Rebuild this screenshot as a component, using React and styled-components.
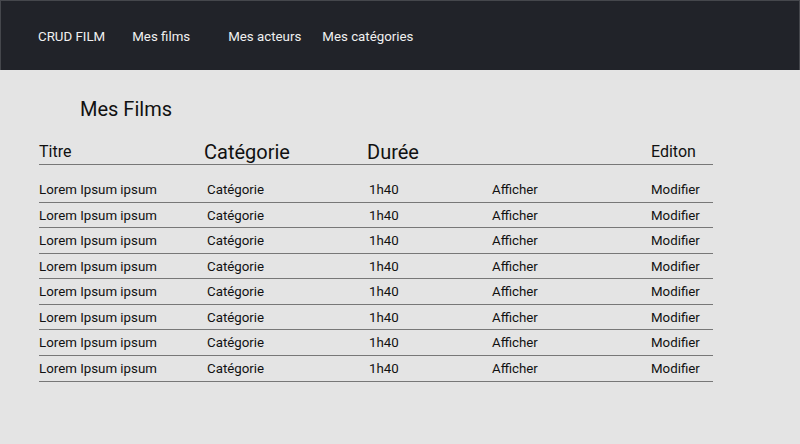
import React from "react";
import styled, { createGlobalStyle } from "styled-components";

const GlobalStyle = createGlobalStyle`
  html, body {
    margin: 0;
    padding: 0;
    background: #e4e4e4;
    font-family: Roboto, "Liberation Sans", sans-serif;
    color: #111;
  }
`;

const NavBar = styled.nav`
  height: 70px;
  box-sizing: border-box;
  background: #212329;
  border: 1px solid #45474c;
  border-bottom: none;
  display: flex;
  align-items: center;
  padding-left: 37px;
  padding-top: 1px;
`;

const NavLink = styled.a`
  color: #f0f0f0;
  font-size: 13.3px;
  text-decoration: none;
  margin-right: ${(p) => p.$space || 0}px;
  cursor: pointer;
`;

const Main = styled.main`
  padding: 27px 0 0 39px;
`;

const PageTitle = styled.h1`
  margin: 0 0 10px 41px;
  font-size: 20px;
  line-height: 24px;
  font-weight: 400;
`;

const Table = styled.div`
  width: 674px;
`;

const Columns = `
  display: grid;
  grid-template-columns: 168px 162px 123px 159px 62px;
`;

const HeadRow = styled.div`
  ${Columns}
  height: 33px;
  align-items: end;
  border-bottom: 1px solid #777;
  margin-bottom: 12px;
`;

const HeadCell = styled.div`
  font-size: ${(p) => (p.$big ? 20 : 16)}px;
  line-height: ${(p) => (p.$big ? 24 : 20)}px;
  margin-left: ${(p) => p.$shift || 0}px;
  margin-bottom: ${(p) => (p.$big ? 0 : 2)}px;
  grid-column: ${(p) => p.$span || "auto"};
  white-space: nowrap;
`;

// une ligne de film
const Row = styled.div`
  ${Columns}
  height: 25.57px;
  box-sizing: border-box;
  padding-top: 0.5px;
  align-items: center;
  border-bottom: 1px solid #777;
  font-size: 13.3px;
`;

const Cell = styled.div`
  white-space: nowrap;
`;

const films = Array.from({ length: 8 }, (_, i) => ({
  id: i,
  titre: "Lorem Ipsum ipsum",
  categorie: "Catégorie",
  duree: "1h40",
}));

const App = () => {
  return (
    <>
      <GlobalStyle />
      <NavBar>
        <NavLink $space={27}>CRUD FILM</NavLink>
        <NavLink $space={38}>Mes films</NavLink>
        <NavLink $space={21}>Mes acteurs</NavLink>
        <NavLink>Mes catégories</NavLink>
      </NavBar>
      <Main>
        <PageTitle>Mes Films</PageTitle>
        <Table>
          <HeadRow>
            <HeadCell>Titre</HeadCell>
            <HeadCell $big $shift={-3}>Catégorie</HeadCell>
            <HeadCell $big $shift={-2} $span="span 2">Durée</HeadCell>
            <HeadCell>Editon</HeadCell>
          </HeadRow>
          {films.map((film) => (
            <Row key={film.id}>
              <Cell>{film.titre}</Cell>
              <Cell>{film.categorie}</Cell>
              <Cell>{film.duree}</Cell>
              <Cell>Afficher</Cell>
              <Cell>Modifier</Cell>
            </Row>
          ))}
        </Table>
      </Main>
    </>
  );
};

export default App;
